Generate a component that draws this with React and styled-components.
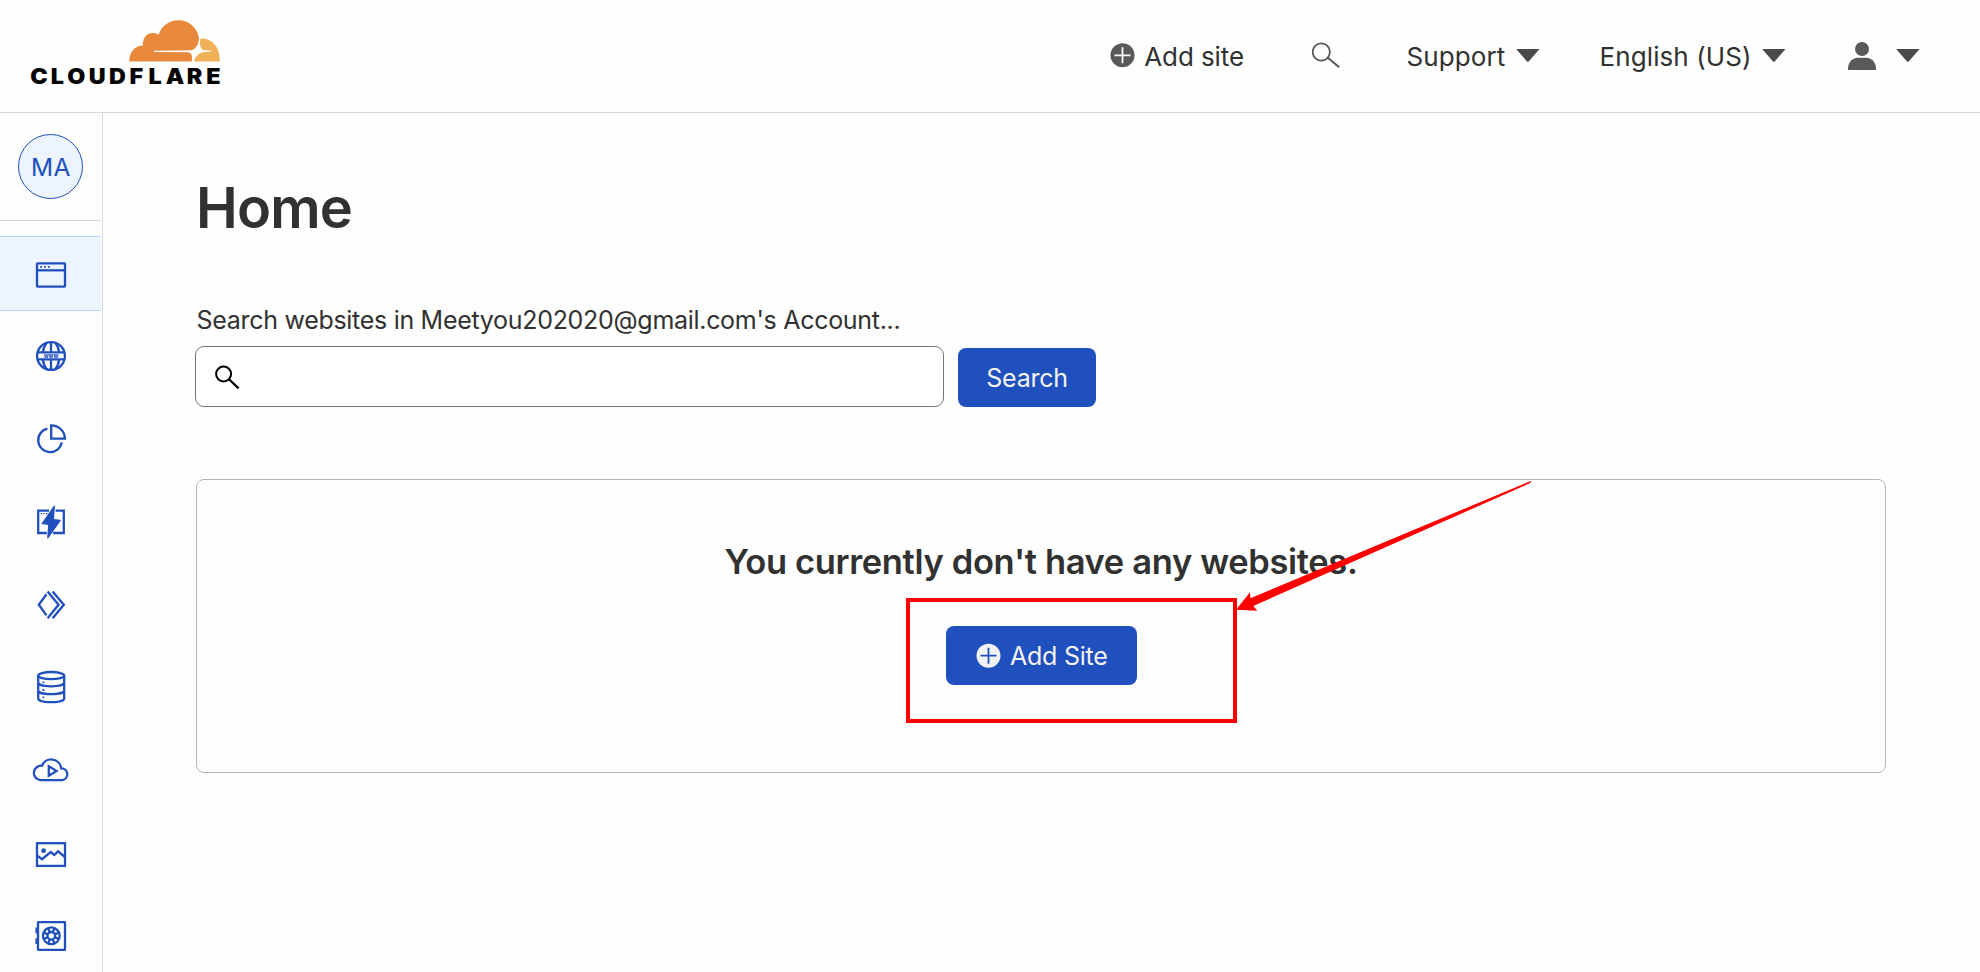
import React from "react";
import styled, { createGlobalStyle } from "styled-components";

const BLUE = "#2050bd";
const INK = "#313131";
const ICON = "#595959";
const CARET = "#4a4a4a";

const GlobalStyle = createGlobalStyle`
  *, *::before, *::after { box-sizing: border-box; }
  html, body { margin: 0; height: 100%; }
  body {
    background: #fefefe;
    color: ${INK};
    font-family: Inter, "Liberation Sans", sans-serif;
    overflow: hidden;
  }
  svg { display: block; flex: none; }
`;

const Page = styled.div`
  display: flex;
  flex-direction: column;
  height: 100vh;
  overflow: hidden;
`;

const Header = styled.header`
  display: flex;
  align-items: center;
  justify-content: space-between;
  flex: none;
  height: 113px;
  padding: 1px 60px 0 30px;
  border-bottom: 1px solid #d9d9d9;
`;

const Nav = styled.nav`
  display: grid;
  grid-template-columns: 202px 94.5px 193px 248.5px 72px;
  align-items: center;
`;

const NavItem = styled.a`
  display: flex;
  align-items: center;
  justify-content: space-between;
  width: ${(p) => p.$width}px;
  font-size: 26px;
  line-height: 32px;
  letter-spacing: ${(p) => p.$tracking || 0}px;
  white-space: nowrap;
`;

const Body = styled.div`
  display: flex;
  flex: 1;
  min-height: 0;
`;

const Sidebar = styled.aside`
  flex: none;
  width: 103px;
  padding-right: 1px;
  border-right: 1px solid #d9d9d9;
  overflow: hidden;
`;

const Profile = styled.div`
  height: 108px;
  padding: 21px 18px 0;
  border-bottom: 1px solid #d9d9d9;
`;

const Avatar = styled.div`
  display: flex;
  align-items: center;
  justify-content: center;
  width: 65px;
  height: 65px;
  padding: 1px 0 0 1px;
  border: 1px solid ${BLUE};
  border-radius: 50%;
  background: #ecf4ff;
  color: ${BLUE};
  font-size: 24.5px;
  letter-spacing: 0.4px;
`;

const Menu = styled.ul`
  display: flex;
  flex-direction: column;
  gap: 8px;
  margin: 15px 0 0;
  padding: 0;
  list-style: none;
`;

const MenuItem = styled.li`
  display: flex;
  flex: none;
  align-items: center;
  height: 75px;
  padding-left: 30px;
  border: solid ${(p) => (p.$active ? "#b9d6ff" : "transparent")};
  border-width: 1px 0;
  background: ${(p) => (p.$active ? "#ecf4ff" : "transparent")};
`;

const Main = styled.main`
  flex: 1;
  padding: 61px 94px 0 93px;
`;

const Title = styled.h1`
  margin: 0;
  font-size: 56px;
  font-weight: 600;
  line-height: 68px;
  letter-spacing: -0.85px;
`;

const Label = styled.label`
  display: block;
  margin: 63px 0 0 0.6px;
  font-size: 25px;
  line-height: 30px;
  letter-spacing: -0.3px;
`;

const SearchRow = styled.div`
  display: flex;
  align-items: flex-end;
  gap: 14px;
  margin: 11px 0 0 -1px;
`;

const SearchField = styled.div`
  display: flex;
  align-items: center;
  width: 749px;
  height: 61px;
  padding-left: 18px;
  border: 1px solid #767676;
  border-radius: 9px;
  background: #fff;
`;

const SearchInput = styled.input`
  flex: 1;
  height: 100%;
  border: 0;
  outline: 0;
  background: transparent;
  font: inherit;
  font-size: 25px;
`;

const Button = styled.button`
  display: flex;
  align-items: center;
  justify-content: ${(p) => (p.$icon ? "flex-start" : "center")};
  gap: 9.5px;
  width: ${(p) => (p.$icon ? 191 : 138)}px;
  height: 59px;
  padding: 0 0 0 ${(p) => (p.$icon ? 30 : 0)}px;
  border: 0;
  border-radius: 8px;
  background: ${BLUE};
  color: #f2f2f2;
  font-family: inherit;
  font-size: 25px;
  line-height: 30px;
  letter-spacing: -0.25px;
  white-space: nowrap;
`;

const Card = styled.section`
  position: relative;
  display: flex;
  flex-direction: column;
  align-items: center;
  height: 294px;
  margin-top: 72px;
  padding-top: 61px;
  border: 1px solid #b6b6b6;
  border-radius: 8px;
`;

const CardTitle = styled.h2`
  margin: 0 0 43px;
  font-size: 34.5px;
  font-weight: 600;
  line-height: 42px;
  letter-spacing: -0.35px;
`;

const Highlight = styled.div`
  position: absolute;
  left: 709px;
  top: 118px;
  width: 331px;
  height: 125px;
  border: 4px solid #f00;
  pointer-events: none;
`;

const Pointer = styled.svg`
  position: absolute;
  left: 1039px;
  top: 0;
  pointer-events: none;
`;

function Logo() {
  return (
    <svg width="192" height="77" viewBox="30 18 192 77" aria-label="Cloudflare">
      <path
        fill="#e8883a"
        d="M129.3 61.6C129 53 134.5 45.7 143 45.6C142 38.5 146.5 33 152.5 33C155 33 157 33.6 158.6 34.8C161.5 26 169 20.2 178.5 20.2C189 20.2 197 27.5 199 37.6C199 43.5 196.2 49.4 191 50.3L154 50.8V51.9L187.6 52.2C191.8 52.6 193 56.6 191.6 61.6Z"
      />
      <path
        fill="#f0b057"
        d="M201 38.2C211.6 38.4 220.6 46.8 219.8 61.6H194C195.2 56.6 198.5 53.2 203 52.2L211.5 51.4V50.7L203 49.9C200.2 48.4 198.6 42 201 38.2Z"
      />
      <text
        transform="scale(1.1 1)"
        x="27.4 46.1 61.1 80.6 99.1 117.8 134.9 150.6 169.8 187.6"
        y="84"
        fontFamily="Inter, sans-serif"
        fontSize="21.2"
        fontWeight="900"
        fill="#050505"
      >
        CLOUDFLARE
      </text>
    </svg>
  );
}

function PlusCircle({ cy, height, fill, cross }) {
  return (
    <svg width="25" height={height} viewBox={`0 0 25 ${height}`}>
      <circle cx="12.5" cy={cy} r="12" fill={fill} />
      <path d={`M4.5 ${cy}H20.5M12.5 ${cy - 8}V${cy + 8}`} stroke={cross} strokeWidth="1.8" />
    </svg>
  );
}

function Caret() {
  return (
    <svg width="24" height="39" viewBox="0 0 24 39">
      <path d="M.2 12H23.5L12.7 24.4Q11.9 25.3 11 24.4Z" fill={CARET} />
    </svg>
  );
}

function NavSearchIcon() {
  return (
    <svg width="28" height="39" viewBox="0 0 28 39" fill="none" stroke={ICON} strokeWidth="1.8">
      <circle cx="9.3" cy="15" r="8.6" />
      <path d="M15.8 20.8L27.2 30.2" strokeWidth="2.1" />
    </svg>
  );
}

function PersonIcon() {
  return (
    <svg width="28" height="39" viewBox="0 0 28 39" fill={ICON}>
      <circle cx="14" cy="12" r="7" />
      <path d="M0 33V30.5C.8 24.5 5 20.8 9.5 20.8H18.5C23 20.8 27.2 24.5 28 30.5V33Z" />
    </svg>
  );
}

function FieldSearchIcon() {
  return (
    <svg width="26" height="26" viewBox="0 0 26 26" fill="none" stroke="#000" strokeWidth="2">
      <circle cx="9.6" cy="10" r="7.5" />
      <path d="M15 15.2L24.6 24.4" strokeWidth="2.2" />
    </svg>
  );
}

const spokes = [0, 45, 90, 135, 180, 225, 270, 315];

const menuIcons = [
  {
    name: "websites",
    art: (
      <>
        <rect x="7" y="10.3" width="28" height="23.4" rx=".6" />
        <path d="M7 17.3H35" />
        <path d="M10.2 13.9h1.8M14.1 13.9h1.8M18 13.9h1.8" strokeWidth="1.8" />
      </>
    ),
  },
  {
    name: "domains",
    art: (
      <>
        <circle cx="21" cy="20" r="13.9" />
        <path d="M7.3 16.4H34.7M7.3 23.4H34.7M21 6V16M21 24V34" />
        <path d="M16.8 6.8C14.6 9.2 13.4 12.4 13 16M25.2 6.8C27.4 9.2 28.6 12.4 29 16M13 24C13.4 27.4 14.6 30.8 16.8 33.2M29 24C28.6 27.4 27.4 30.8 25.2 33.2" />
        <text
          x="21"
          y="21.6"
          textAnchor="middle"
          fontFamily="Inter, sans-serif"
          fontSize="5.6"
          fontWeight="800"
          fill={BLUE}
          stroke="none"
        >
          www
        </text>
      </>
    ),
  },
  {
    name: "analytics",
    art: (
      <>
        <path d="M17.4 9.6A11.9 11.9 0 1 0 31.8 23.4" />
        <path d="M21.2 6.4V19.6H35C34.6 12 29 6.6 21.2 6.4Z" />
      </>
    ),
  },
  {
    name: "performance",
    art: (
      <>
        <path d="M19 8.7H8.2V31H16.8M25.6 8.7H33.8V31H23" />
        <path d="M10.8 11.6h1.4M13.4 11.6h1.4M16 11.6h1.4" strokeWidth="1.4" />
        <path
          d="M24.3 4.2L12.2 21.6L18.8 22.3L17.8 35.8L30.2 18.4L23.4 17.6Z"
          fill={BLUE}
          strokeWidth="1.2"
          strokeLinejoin="round"
        />
      </>
    ),
  },
  {
    name: "workers",
    art: (
      <path d="M16.5 9.2L8.8 19.8L16.5 30.4M17.6 6.4L28.6 19.8L17.6 33.2M22.6 6.4L33.8 19.8L22.6 33.2" />
    ),
  },
  {
    name: "storage",
    art: (
      <>
        <ellipse cx="21.2" cy="7.6" rx="13" ry="3.6" />
        <path d="M8.2 7.6V30.6C8.2 35.4 34.2 35.4 34.2 30.6V7.6M8.2 14.6C8.2 19.6 34.2 19.6 34.2 14.6M8.2 22.4C8.2 27.4 34.2 27.4 34.2 22.4" />
        <path d="M12.5 14.4h1.8M12.5 22h1.8M12.5 29.4h1.8" strokeWidth="1.8" />
      </>
    ),
  },
  {
    name: "stream",
    art: (
      <>
        <path d="M10.4 29.2A7.2 7.2 0 0 1 12 14.7A10 10 0 0 1 31.2 17.3A6 6 0 0 1 32.4 29.2Z" />
        <path d="M18.8 15.2V24.8L26.6 20Z" />
      </>
    ),
  },
  {
    name: "images",
    art: (
      <>
        <rect x="7" y="9.2" width="28" height="22.7" />
        <circle cx="13.6" cy="16.7" r="2.4" fill={BLUE} stroke="none" />
        <path d="M7 21.4L12 25.2L20.7 18L24.3 21L28 17.4L35 23" />
      </>
    ),
  },
  {
    name: "security",
    art: (
      <>
        <rect x="8" y="5.2" width="27" height="27.6" rx=".4" />
        <path d="M6.6 10.5V16.5M6.6 21.2V27" />
        <circle cx="21.3" cy="18.8" r="8.4" />
        <circle cx="21.3" cy="18.8" r="3.8" />
        {spokes.map((a) => (
          <path key={a} d="M24.9 18.8H29.9" transform={`rotate(${a + 22.5} 21.3 18.8)`} />
        ))}
      </>
    ),
  },
];

export default function App() {
  return (
    <>
      <GlobalStyle />
      <Page>
        <Header>
          <Logo />
          <Nav>
            <NavItem $width={134} $tracking={-0.1}>
              <PlusCircle cy={18.3} height={39} fill={ICON} cross="#fff" />
              Add site
            </NavItem>
            <NavItem $width={28}>
              <NavSearchIcon />
            </NavItem>
            <NavItem $width={133.5} $tracking={0.1}>
              Support
              <Caret />
            </NavItem>
            <NavItem $width={186} $tracking={0.1}>
              English (US)
              <Caret />
            </NavItem>
            <NavItem $width={72}>
              <PersonIcon />
              <Caret />
            </NavItem>
          </Nav>
        </Header>
        <Body>
          <Sidebar>
            <Profile>
              <Avatar>MA</Avatar>
            </Profile>
            <Menu>
              {menuIcons.map(({ name, art }, i) => (
                <MenuItem key={name} $active={i === 0}>
                  <svg
                    width="41"
                    height="41"
                    viewBox="0 0 41 41"
                    fill="none"
                    stroke={BLUE}
                    strokeWidth="2.3"
                  >
                    {art}
                  </svg>
                </MenuItem>
              ))}
            </Menu>
          </Sidebar>
          <Main>
            <Title>Home</Title>
            <Label htmlFor="site-search">
              Search websites in Meetyou202020@gmail.com's Account...
            </Label>
            <SearchRow>
              <SearchField>
                <FieldSearchIcon />
                <SearchInput id="site-search" />
              </SearchField>
              <Button>Search</Button>
            </SearchRow>
            <Card>
              <CardTitle>You currently don't have any websites.</CardTitle>
              <Button $icon>
                <PlusCircle cy={12.7} height={25} fill="#f2f2f2" cross={BLUE} />
                Add Site
              </Button>
              <Highlight />
              <Pointer width="296" height="133" viewBox="0 0 296 133">
                <path
                  d="M0 129.7L14 112.3L14.4 118.3L294.6 1L294.8 2.8L17.3 126L21.3 130.7Z"
                  fill="#f00"
                />
              </Pointer>
            </Card>
          </Main>
        </Body>
      </Page>
    </>
  );
}
